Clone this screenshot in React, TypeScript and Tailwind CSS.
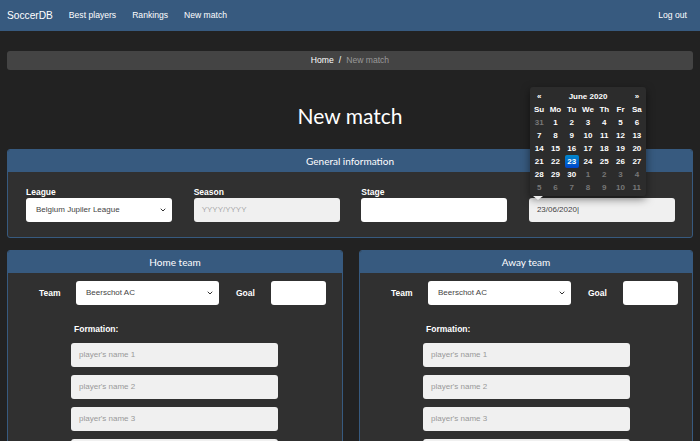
import { ChevronDown } from 'lucide-react';

const arial = { fontFamily: '"Liberation Sans", Arial, sans-serif' };

const weeks = [
  [31, 1, 2, 3, 4, 5, 6],
  [7, 8, 9, 10, 11, 12, 13],
  [14, 15, 16, 17, 18, 19, 20],
  [21, 22, 23, 24, 25, 26, 27],
  [28, 29, 30, 1, 2, 3, 4],
  [5, 6, 7, 8, 9, 10, 11],
];

function Select({ value, className }: { value: string; className: string }) {
  return (
    <div className={`h-6 bg-white rounded-[3px] flex items-center justify-between pl-[10px] pr-[5px] text-[8px] text-[#444] ${className}`}>
      <span>{value}</span>
      <ChevronDown size={8} strokeWidth={3} className="text-[#333]" />
    </div>
  );
}

function Calendar() {
  return (
    <div className="absolute left-[530px] top-[87px] w-[116px] bg-[#2c2c2c] rounded-[3px] shadow-[0_3px_8px_rgba(0,0,0,0.5)] px-[1px] pt-[3px] pb-[2px] text-[8px] font-bold text-white" style={arial}>
      <div className="grid grid-cols-7 h-[13px] items-center text-center">
        <span>«</span>
        <span className="col-span-5">June 2020</span>
        <span>»</span>
      </div>
      <div className="grid grid-cols-7 h-[13px] items-center text-center">
        {['Su', 'Mo', 'Tu', 'We', 'Th', 'Fr', 'Sa'].map(d => <span key={d}>{d}</span>)}
      </div>
      {weeks.map((w, wi) => (
        <div key={wi} className="grid grid-cols-7 h-[13px] items-center text-center">
          {w.map((d, di) => {
            const muted = (wi === 0 && d > 20) || (wi >= 4 && d < 20);
            const active = wi === 3 && d === 23;
            return (
              <span
                key={di}
                className={`mx-[1px] h-[13px] leading-[13px] rounded-[2px] ${muted ? 'text-[#777]' : ''} ${active ? 'bg-gradient-to-b from-[#0088cc] to-[#0044cc]' : ''}`}
              >
                {d}
              </span>
            );
          })}
        </div>
      ))}
      <div className="absolute left-[3px] -bottom-[4px] w-0 h-0 border-l-[5px] border-r-[5px] border-t-[4px] border-l-transparent border-r-transparent border-t-[#eee]" />
    </div>
  );
}

function TeamCard({ title }: { title: string }) {
  return (
    <div className="bg-[#303030] border border-[#375a7f] rounded-[3px] overflow-hidden">
      <div className="h-[22px] bg-[#375a7f] flex items-center justify-center text-[10px] text-white" style={{ fontFamily: 'Lato, sans-serif' }}>
        {title}
      </div>
      <div className="pt-[8px] pb-4">
        <div className="flex items-start">
          <span className="ml-[31px] w-[37px] mt-[6px] text-[8.5px] font-bold text-white">Team</span>
          <Select value="Beerschot AC" className="w-[143px]" />
          <span className="ml-[17px] w-[35px] mt-[6px] text-[8.5px] font-bold text-white">Goal</span>
          <div className="w-[55px] h-6 bg-white rounded-[3px]" />
        </div>
        <div className="ml-[66px] mt-[18px] text-[8.5px] font-bold text-white">Formation:</div>
        <div className="ml-[63px] mt-[7px] flex flex-col gap-2">
          {[1, 2, 3, 4].map(n => (
            <div key={n} className="w-[207px] h-6 bg-[#f0f0f0] rounded-[3px] flex items-center pl-[8px] text-[8px] leading-none text-[#999]">
              player's name {n}
            </div>
          ))}
        </div>
      </div>
    </div>
  );
}

export default function App() {
  return (
    <div className="relative h-[441px] bg-[#222222] overflow-hidden" style={arial}>
      {/* Navbar */}
      <nav className="h-[31px] bg-[#375a7f] flex items-center px-[7px] text-white">
        <span className="text-[10.2px]">SoccerDB</span>
        <span className="ml-[16px] text-[8.6px]">Best players</span>
        <span className="ml-[16px] text-[8.6px]">Rankings</span>
        <span className="ml-[16px] text-[8.6px]">New match</span>
        <span className="ml-auto mr-[6px] text-[8.6px]">Log out</span>
      </nav>

      <div className="px-[7px]">
        {/* Breadcrumb */}
        <div className="mt-[20px] h-[19px] bg-[#444444] rounded-[3px] flex items-center justify-center text-[8.6px]">
          <span className="text-white">Home</span>
          <span className="mx-[5px] text-white">/</span>
          <span className="text-[#999]">New match</span>
        </div>

        <h1 className="mt-[32px] text-center text-[21px] leading-[28px] text-white" style={{ fontFamily: 'Lato, sans-serif' }}>
          New match
        </h1>

        {/* General information */}
        <div className="mt-[19px] bg-[#303030] border border-[#375a7f] rounded-[3px] overflow-hidden">
          <div className="h-[22px] bg-[#375a7f] flex items-center justify-center text-[10px] text-white" style={{ fontFamily: 'Lato, sans-serif' }}>
            General information
          </div>
          <div className="grid grid-cols-4 gap-x-[21.5px] pl-[18px] pr-[17px] pt-[14px] pb-[15px]">
            <div>
              <div className="text-[8.5px] font-bold text-white leading-[12px]">League</div>
              <Select value="Belgium Jupiler League" className="w-full" />
            </div>
            <div>
              <div className="text-[8.5px] font-bold text-white leading-[12px]">Season</div>
              <div className="h-6 bg-[#f0f0f0] rounded-[3px] flex items-center pl-[8px] text-[8px] text-[#aaa]">YYYY/YYYY</div>
            </div>
            <div>
              <div className="text-[8.5px] font-bold text-white leading-[12px]">Stage</div>
              <div className="h-6 bg-white rounded-[3px]" />
            </div>
            <div>
              <div className="text-[8.5px] leading-[12px]">&nbsp;</div>
              <div className="h-6 bg-[#f0f0f0] rounded-[3px] flex items-center pl-[8px] text-[8px] text-[#444]">23/06/2020|</div>
            </div>
          </div>
        </div>

        {/* Teams */}
        <div className="mt-[12px] grid grid-cols-[336px_1fr] gap-x-[16px]">
          <TeamCard title="Home team" />
          <TeamCard title="Away team" />
        </div>
      </div>

      <Calendar />
    </div>
  );
}
